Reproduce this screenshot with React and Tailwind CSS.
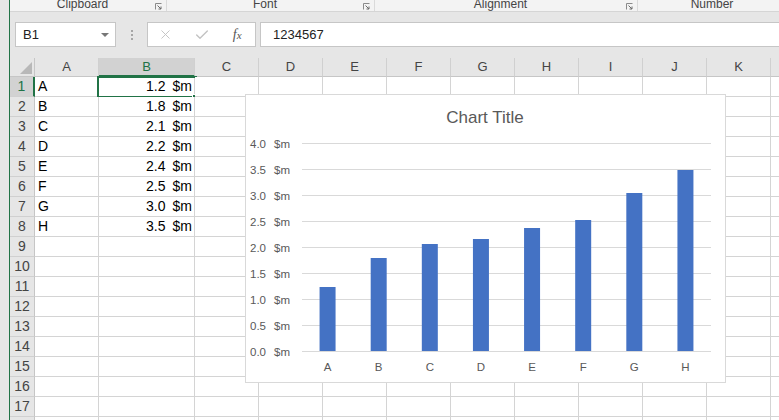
import { X, Check } from "lucide-react";

const columns = [
  { key: "A", w: "w-[64px]" },
  { key: "B", w: "w-[96px]" },
  { key: "C", w: "w-[64px]" },
  { key: "D", w: "w-[64px]" },
  { key: "E", w: "w-[64px]" },
  { key: "F", w: "w-[64px]" },
  { key: "G", w: "w-[64px]" },
  { key: "H", w: "w-[64px]" },
  { key: "I", w: "w-[64px]" },
  { key: "J", w: "w-[64px]" },
  { key: "K", w: "w-[64px]" },
  { key: "L", w: "w-[64px]" },
];

const data = [
  { label: "A", value: "1.2", h: 64 },
  { label: "B", value: "1.8", h: 93 },
  { label: "C", value: "2.1", h: 107 },
  { label: "D", value: "2.2", h: 112 },
  { label: "E", value: "2.4", h: 123 },
  { label: "F", value: "2.5", h: 131 },
  { label: "G", value: "3.0", h: 158 },
  { label: "H", value: "3.5", h: 181 },
];

const rows = Array.from({ length: 18 }, (_, i) => i + 1);

const ribbonGroups = [
  { name: "Clipboard", w: "w-[157px]" },
  { name: "Font", w: "w-[208px]" },
  { name: "Alignment", w: "w-[263px]" },
  { name: "Number", w: "w-[160px]" },
];

const Launcher = () => (
  <svg width="7" height="7" viewBox="0 0 7 7" className="shrink-0">
    <path d="M0.5 6.5V0.5H6.5" fill="none" stroke="#8a8a8a" strokeWidth="1" />
    <path d="M2.5 2.5L6 6M6 3.5V6H3.5" fill="none" stroke="#6a6a6a" strokeWidth="1" />
  </svg>
);

const Chart = () => {
  const ticks = ["4.0", "3.5", "3.0", "2.5", "2.0", "1.5", "1.0", "0.5", "0.0"];
  const step = 409 / 8;
  const font = "Liberation Sans, Arial, sans-serif";
  return (
    <div className="absolute left-[235px] top-[94px] w-[481px] h-[289px] bg-white border border-[#d9d9d9]">
      <svg width="479" height="287" viewBox="0 0 479 287">
        <text x="239" y="28" textAnchor="middle" fontFamily={font} fontSize="17" fill="#595959">
          Chart Title
        </text>
        {ticks.map((t, i) => {
          const y = 48.5 + i * 26;
          return (
            <g key={t}>
              <line x1="56" x2="465" y1={y} y2={y} stroke="#d9d9d9" strokeWidth="1" />
              <text x="20" y={y + 4} textAnchor="end" fontFamily={font} fontSize="11.5" fill="#595959">
                {t}
              </text>
              <text x="44" y={y + 4} textAnchor="end" fontFamily={font} fontSize="11.5" fill="#595959">
                $m
              </text>
            </g>
          );
        })}
        {data.map((d, i) => {
          const cx = 56 + step * (i + 0.5);
          return (
            <g key={d.label}>
              <rect x={cx - 8} y={256 - d.h} width="16" height={d.h} fill="#4472c4" />
              <text x={cx} y="276" textAnchor="middle" fontFamily={font} fontSize="11.5" fill="#595959">
                {d.label}
              </text>
            </g>
          );
        })}
      </svg>
    </div>
  );
};

export default function App() {
  return (
    <div className="w-[779px] h-[420px] overflow-hidden flex bg-[#e6e6e6] font-['Liberation_Sans',Arial,sans-serif]">
      <div className="w-[9px] shrink-0 bg-[#e6e6e6]" />
      <div className="w-px shrink-0 bg-[#217346]" />
      <div className="relative flex-1 min-w-0 flex flex-col">
        {/* Ribbon group labels */}
        <div className="h-[12px] shrink-0 flex bg-[#f3f3f3] border-b border-[#d5d5d5] overflow-hidden">
          {ribbonGroups.map((g) => (
            <div key={g.name} className={`${g.w} shrink-0 flex items-start border-r border-[#dadada] pr-[4px]`}>
              <span className="flex-1 text-center text-[12px] leading-[12px] -mt-[2px] text-[#444]">{g.name}</span>
              <div className="mt-[3px]">
                <Launcher />
              </div>
            </div>
          ))}
        </div>

        {/* Formula bar */}
        <div className="h-[46px] shrink-0 flex items-start pt-[10px] pl-[5px]">
          <div className="w-[101px] h-[25px] shrink-0 bg-white border border-[#c6c6c6] flex items-center justify-between pl-[7px] pr-[6px]">
            <span className="text-[13px] text-[#222]">B1</span>
            <svg width="8" height="4" viewBox="0 0 8 4">
              <path d="M0 0H8L4 4Z" fill="#777" />
            </svg>
          </div>
          <div className="w-[31px] h-[25px] shrink-0 flex flex-col items-center justify-center gap-[2px]">
            <span className="w-[2px] h-[2px] bg-[#a6a6a6]" />
            <span className="w-[2px] h-[2px] bg-[#a6a6a6]" />
            <span className="w-[2px] h-[2px] bg-[#a6a6a6]" />
          </div>
          <div className="w-[109px] h-[25px] shrink-0 bg-white border border-[#c6c6c6] flex items-center">
            <span className="w-[36px] flex justify-center">
              <X size={15} strokeWidth={1.5} color="#c2c2c2" />
            </span>
            <span className="w-[36px] flex justify-center">
              <Check size={16} strokeWidth={2} color="#c2c2c2" />
            </span>
            <span className="w-[36px] flex justify-center font-['Liberation_Serif',serif] italic text-[14px] text-[#555]">
              f<span className="text-[11px] mt-[3px]">x</span>
            </span>
          </div>
          <div className="ml-[4px] flex-1 h-[25px] bg-white border border-r-0 border-[#c6c6c6] flex items-center pl-[12px] text-[13px] text-[#222]">
            1234567
          </div>
        </div>

        {/* Sheet */}
        <div className="flex-1 flex flex-col overflow-hidden">
          <div className="h-[19px] shrink-0 flex">
            <div className="w-[25px] shrink-0 border-r border-b border-[#c6c6c6] flex items-end justify-end pr-[2px] pb-[2px]">
              <svg width="12" height="12" viewBox="0 0 12 12">
                <path d="M12 0V12H0Z" fill="#b8b8b8" />
              </svg>
            </div>
            {columns.map((c) => (
              <div
                key={c.key}
                className={`${c.w} shrink-0 flex items-center justify-center text-[13px] border-r border-[#d0d0d0] ${
                  c.key === "B"
                    ? "bg-[#d2d2d2] text-[#217346] border-b-2 border-b-[#217346]"
                    : "text-[#444] border-b border-b-[#c6c6c6]"
                }`}
              >
                {c.key}
              </div>
            ))}
          </div>
          {rows.map((r) => {
            const item = data[r - 1];
            return (
              <div key={r} className="h-[20px] shrink-0 flex">
                <div
                  className={`w-[25px] shrink-0 flex items-center justify-center text-[14px] border-b border-[#d0d0d0] ${
                    r === 1
                      ? "bg-[#d2d2d2] text-[#217346] border-r-2 border-r-[#217346]"
                      : "text-[#444] border-r border-r-[#c6c6c6]"
                  }`}
                >
                  {r}
                </div>
                {columns.map((c) => (
                  <div
                    key={c.key}
                    className={`${c.w} shrink-0 relative bg-white border-r border-b border-[#d4d4d4] flex items-center text-[14px] text-black ${
                      c.key === "B" ? "justify-end pr-[2px]" : "pl-[3px]"
                    }`}
                  >
                    {item && c.key === "A" && item.label}
                    {item && c.key === "B" && (
                      <span className="flex gap-[7px]">
                        <span>{item.value}</span>
                        <span>$m</span>
                      </span>
                    )}
                    {r === 1 && c.key === "B" && (
                      <div className="absolute -left-[2px] -top-[1px] w-[100px] h-[22px] border-2 border-[#217346]">
                        <div className="absolute left-[93px] top-[16px] w-[6px] h-[6px] bg-[#217346] border border-white" />
                      </div>
                    )}
                  </div>
                ))}
              </div>
            );
          })}
        </div>

        <Chart />
      </div>
    </div>
  );
}
